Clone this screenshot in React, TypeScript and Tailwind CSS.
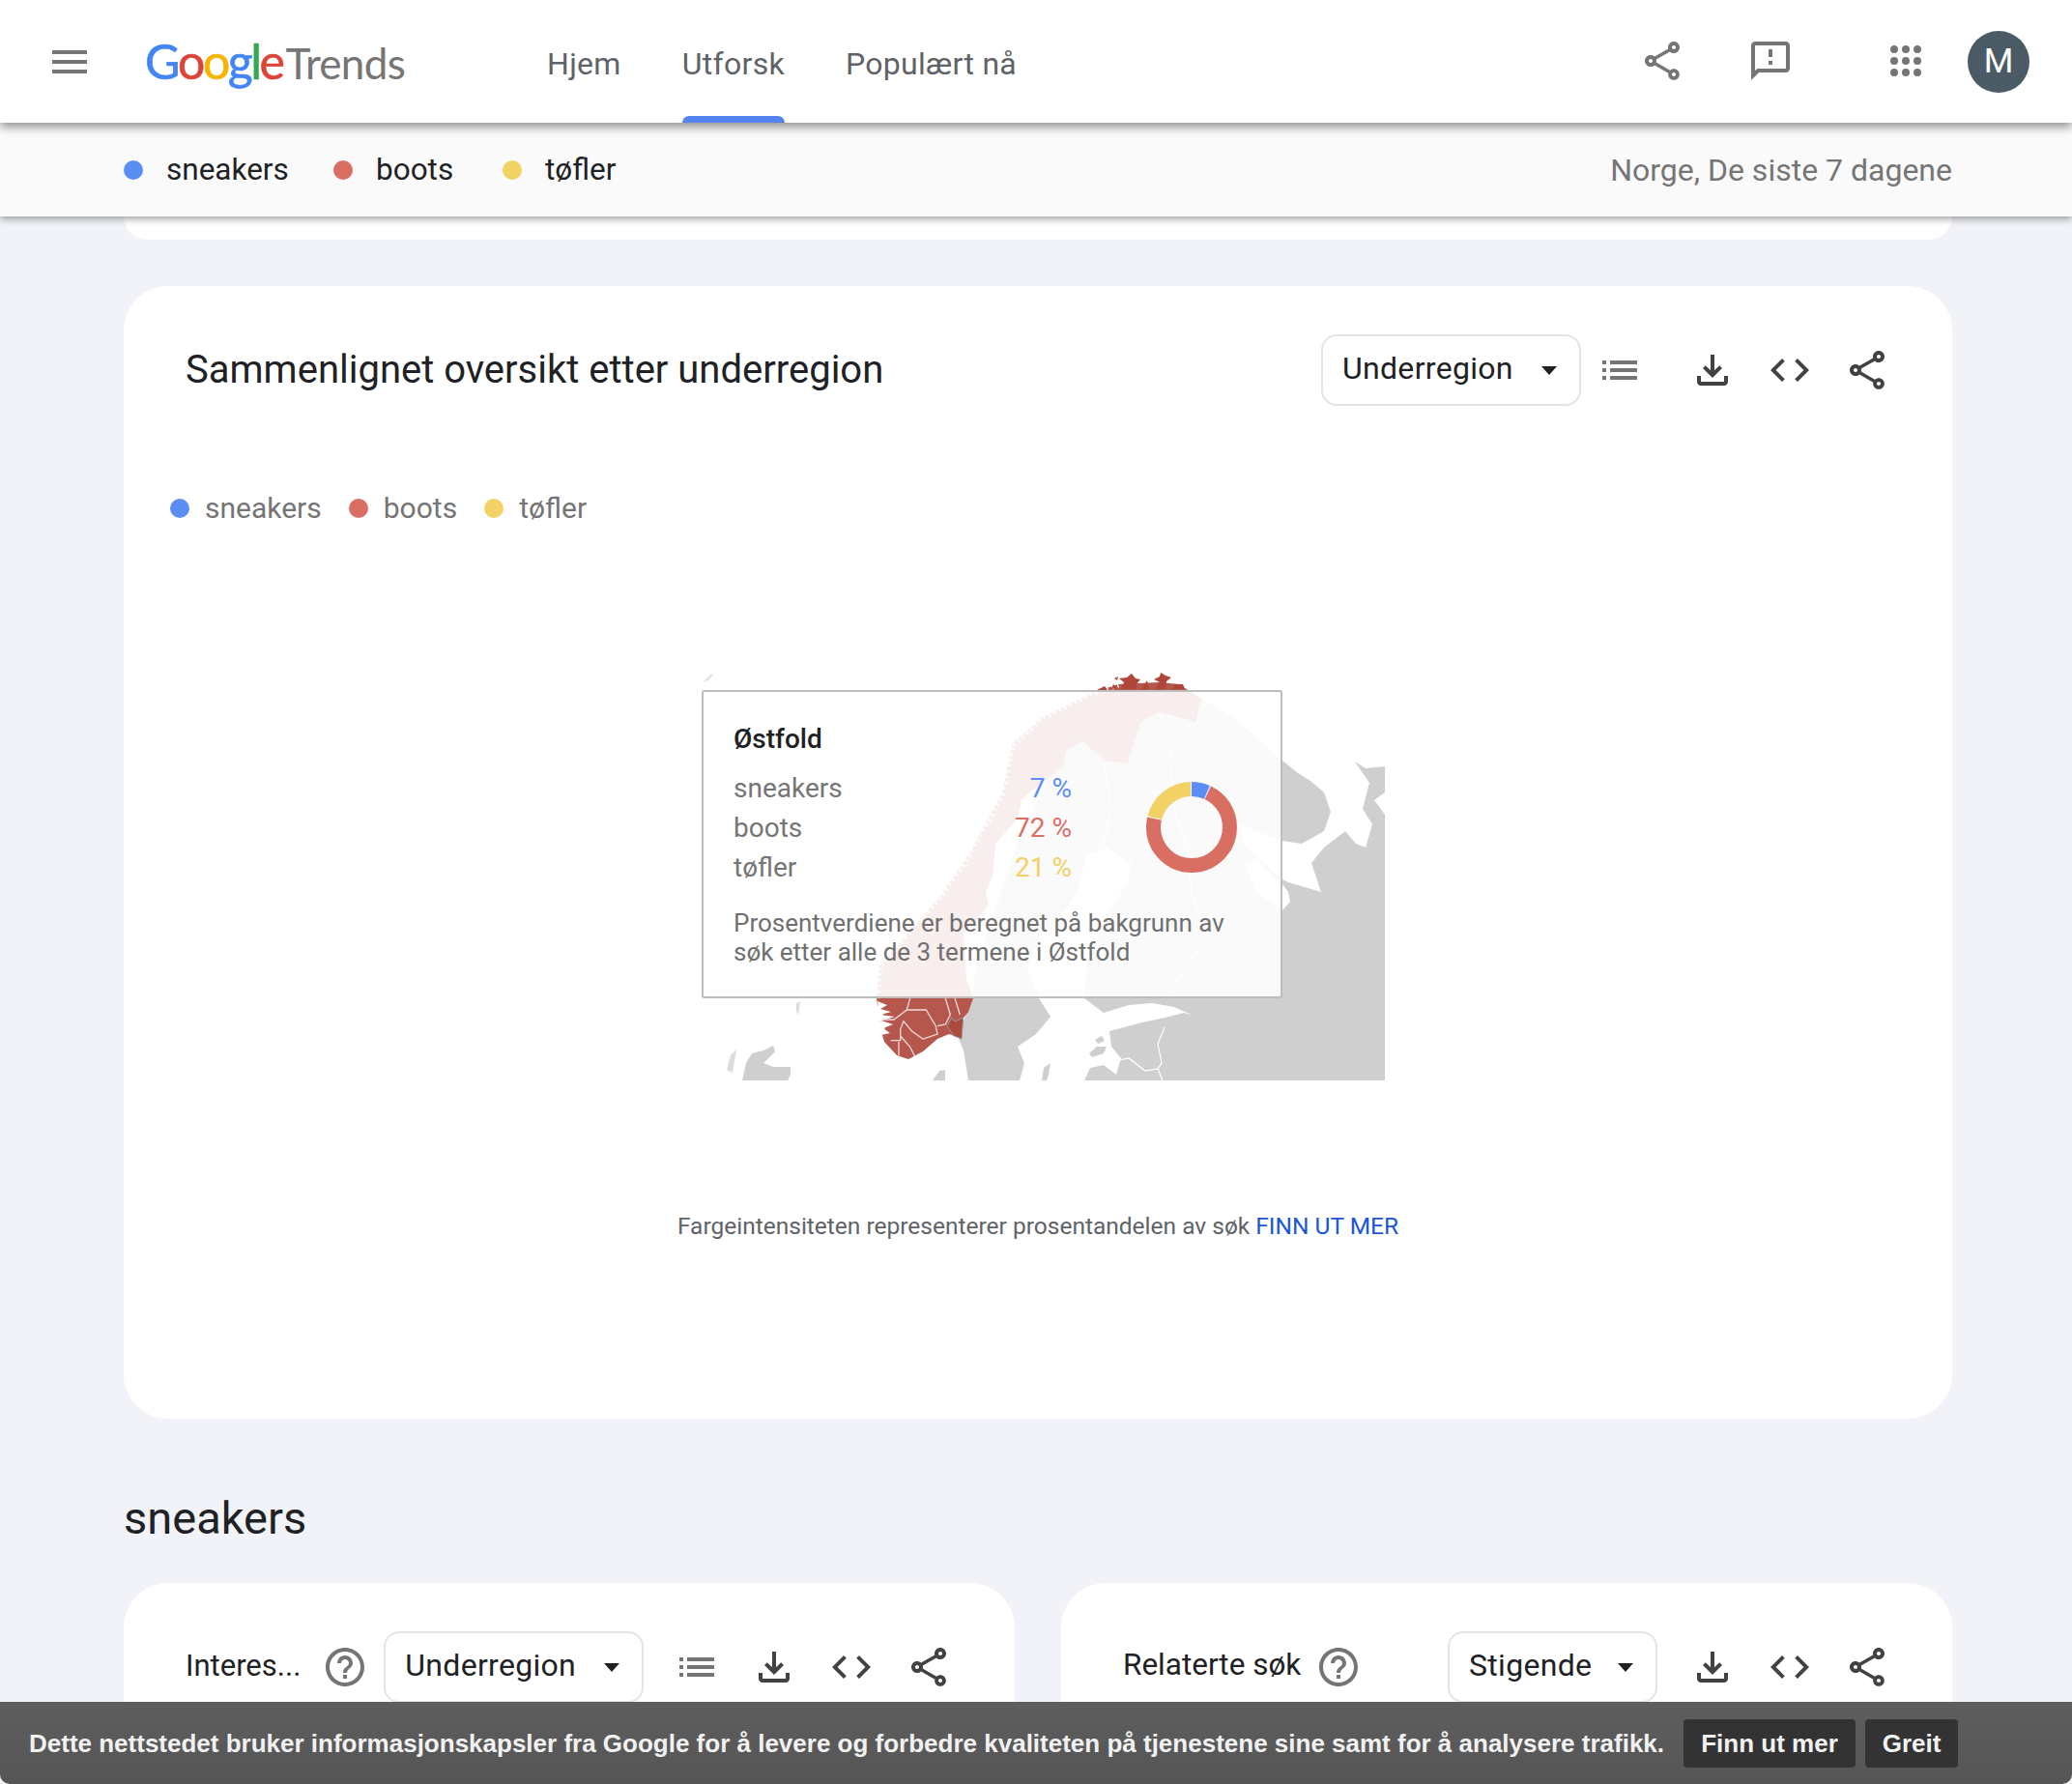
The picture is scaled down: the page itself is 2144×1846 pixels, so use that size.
import type { ReactNode } from "react"

const sans = "font-['Roboto',sans-serif]"

const paths = {
  share:
    "M18 16.08c-.76 0-1.44.3-1.96.77L8.91 12.7c.05-.23.09-.46.09-.7s-.04-.47-.09-.7l7.05-4.11c.54.5 1.25.81 2.04.81 1.66 0 3-1.34 3-3s-1.34-3-3-3-3 1.34-3 3c0 .24.04.47.09.7L8.04 9.81C7.5 9.31 6.79 9 6 9c-1.66 0-3 1.34-3 3s1.34 3 3 3c.79 0 1.5-.31 2.04-.81l7.12 4.16c-.05.21-.08.43-.08.65 0 1.61 1.31 2.92 2.92 2.92s2.92-1.31 2.92-2.92-1.31-2.92-2.92-2.92zM18 4c.55 0 1 .45 1 1s-.45 1-1 1-1-.45-1-1 .45-1 1-1zM6 13c-.55 0-1-.45-1-1s.45-1 1-1 1 .45 1 1-.45 1-1 1zm12 7.02c-.55 0-1-.45-1-1s.45-1 1-1 1 .45 1 1-.45 1-1 1z",
  feedback:
    "M20 2H4c-1.1 0-2 .9-2 2v18l4-4h14c1.1 0 2-.9 2-2V4c0-1.1-.9-2-2-2zm0 14H5.17L4 17.17V4h16v12zM11 12h2v2h-2zm0-6h2v4h-2z",
  download:
    "M18 15v3H6v-3H4v3c0 1.1.9 2 2 2h12c1.1 0 2-.9 2-2v-3h-2zm-1-4l-1.41-1.41L13 12.17V4h-2v8.17L8.41 9.59 7 11l5 5 5-5z",
  code: "M9.4 16.6L4.8 12l4.6-4.6L8 6l-6 6 6 6 1.4-1.4zm5.2 0l4.6-4.6-4.6-4.6L16 6l6 6-6 6-1.4-1.4z",
  list: "M3 13h2v-2H3v2zm0 4h2v-2H3v2zm0-8h2V7H3v2zm4 4h14v-2H7v2zm0 4h14v-2H7v2zM7 7v2h14V7H7z",
  help: "M11 18h2v-2h-2v2zm1-16C6.48 2 2 6.48 2 12s4.48 10 10 10 10-4.48 10-10S17.52 2 12 2zm0 18c-4.41 0-8-3.59-8-8s3.59-8 8-8 8 3.59 8 8-3.59 8-8 8zm0-14c-2.21 0-4 1.79-4 4h2c0-1.1.9-2 2-2s2 .9 2 2c0 2-3 1.75-3 5h2c0-2.25 3-2.5 3-5 0-2.21-1.79-4-4-4z",
}

function Icon({ d, className }: { d: string; className: string }) {
  return (
    <svg viewBox="0 0 24 24" className={`w-12 h-12 shrink-0 fill-current ${className}`}>
      <path d={d} />
    </svg>
  )
}

function Dropdown({ label, className }: { label: string; className: string }) {
  return (
    <div className={`flex items-center justify-between h-[74px] shrink-0 border-2 border-[#e4e4e4] rounded-[16px] bg-white pl-[20px] pr-[23px] text-[32px] tracking-[0.3px] text-[#202124] ${className}`}>
      <span className="pb-[4px]">{label}</span>
      <span className="w-0 h-0 border-x-[8px] border-x-transparent border-t-[9px] border-t-[#212121]" />
    </div>
  )
}

function Actions({ listClass, className }: { listClass?: string; className: string }) {
  return (
    <div className={`flex items-center ${className}`}>
      {listClass && <Icon d={paths.list} className={`text-[#757575] ${listClass}`} />}
      <div className="flex items-center gap-[32px] text-[#424242]">
        <Icon d={paths.download} className="" />
        <Icon d={paths.code} className="" />
        <Icon d={paths.share} className="" />
      </div>
    </div>
  )
}

type Term = { name: string; dot: string; width?: string }

function Legend({ items, textClass, gap }: { items: Term[]; textClass: string; gap: string }) {
  return (
    <div className={`flex items-center ${gap}`}>
      {items.map((i) => (
        <div key={i.name} className="flex items-center">
          <span className={`w-5 h-5 rounded-full ${i.dot}`} />
          <span className={`${textClass} ${i.width ?? ""}`}>{i.name}</span>
        </div>
      ))}
    </div>
  )
}

const terms: Term[] = [
  { name: "sneakers", dot: "bg-[#5b8ef5]", width: "w-[125px]" },
  { name: "boots", dot: "bg-[#d96e63]", width: "w-[83px]" },
  { name: "tøfler", dot: "bg-[#f2d165]" },
]

const plainTerms: Term[] = terms.map((t) => ({ name: t.name, dot: t.dot }))

function NorwayMap() {
  return (
    <svg viewBox="725 690 708 428" className="w-[708px] h-[428px] block">
      {/* land */}
      <path
        fill="#cfcfcf"
        d="M1100 770 L1243 723 L1280 745 L1327 787 L1343 800 L1356 808 L1370 820 L1377 840 L1370 860 L1347 873 L1327 870 L1300 860 L1283 853 L1288 875 L1327 910 L1333 913 L1347 917 L1367 923 L1362 908 L1357 893 L1370 877 L1392 860 L1403 873 L1413 877 L1420 853 L1410 837 L1417 810 L1402 788 L1413 795 L1433 793 L1433 820 L1422 828 L1433 843 L1433 1118 L1122 1118 L1128 1105 L1142 1102 L1155 1112 L1160 1095 L1150 1083 L1148 1067 L1182 1058 L1205 1053 L1225 1048 L1233 1050 L1215 1042 L1192 1038 L1168 1040 L1142 1048 L1122 1033 L1125 1000 L1143 950 L1167 913 L1170 893 L1145 877 L1125 885 L1115 920 L1100 945 L1075 970 L1063 1000 L1075 1033 L1087 1052 L1072 1070 L1053 1083 L1060 1100 L1055 1118 L1002 1118 L997 1087 L992 1075 L998 1053 L1006 1033 L1010 1000 L1050 880 Z"
      />
      <path fill="#ffffff" d="M1288 893 L1300 923 L1327 942 L1335 933 L1333 923 L1327 915 L1300 890 Z" />
      {/* islands */}
      <path fill="#cfcfcf" d="M1127 1090 L1135 1083 L1145 1083 L1142 1090 L1130 1094 Z" />
      <path fill="#cfcfcf" d="M1133 1076 L1140 1072 L1143 1077 L1136 1080 Z" />
      <path fill="#cfcfcf" d="M1078 1118 L1080 1105 L1087 1100 L1085 1112 L1083 1118 Z" />
      <path fill="#cfcfcf" d="M965 1118 L972 1108 L978 1107 L978 1118 Z" />
      <path fill="#cfcfcf" d="M768 1118 L772 1100 L778 1090 L790 1087 L800 1082 L802 1088 L790 1100 L800 1104 L818 1104 L818 1112 L815 1118 Z" />
      <path fill="#dcdcdc" d="M752 1107 L756 1092 L762 1086 L760 1098 L758 1110 Z" />
      <path fill="#dcdcdc" d="M824 1038 L828 1036 L826 1050 L824 1046 Z" />
      <path fill="#e4e4e4" d="M727 706 L735 698 L739 697 L733 704 Z" />
      {/* borders */}
      <g fill="none" stroke="#ffffff" strokeWidth="1.2">
        <path d="M1158 1097 L1168 1095 L1185 1108 L1198 1106 L1203 1118" />
        <path d="M1205 1063 L1198 1080 L1202 1100 L1198 1106" />
        <path d="M1217 770 L1210 783 L1217 847 L1230 877 L1233 927 L1250 967 L1207 1030" />
        <path d="M1143 790 L1150 840 L1140 875" />
      </g>
      {/* Norway */}
      <path
        fill="#b5574c"
        d="M1130 717 L1157 708 L1200 706 L1220 708 L1243 723 L1237 747 L1223 743 L1200 737 L1180 747 L1167 790 L1143 787 L1120 767 L1103 777 L1100 793 L1057 827 L1053 847 L1030 873 L1027 907 L1020 923 L1023 937 L997 967 L1000 1013 L1007 1033 L1002 1047 L997 1053 L995 1075 L982 1070 L970 1075 L955 1088 L940 1096 L928 1092 L915 1078 L912 1068 L916 1064 L910 1057 L914 1050 L908 1040 L907 1033 L910 1000 L933 973 L973 927 L1003 883 L1037 820 L1047 770 L1077 743 Z"
      />
      {/* feathered coast */}
      <path
        fill="none"
        stroke="#ffffff"
        strokeWidth="7"
        strokeDasharray="2 4"
        d="M907 1033 L910 1000 L933 973 L973 927 L1003 883 L1037 820 L1047 770 L1077 743 L1130 717 L1157 708"
      />
      <path
        fill="#b0463a"
        d="M1160 713 L1163 706 L1158 702 L1166 701 L1171 697 L1175 702 L1180 703 L1176 708 L1176 713 Z M1181 713 L1187 704 L1189 713 Z M1195 713 L1200 706 L1194 703 L1200 700 L1201 696 L1206 699 L1212 701 L1207 705 L1206 713 Z M1213 713 L1216 708 L1224 708 L1226 713 Z M1150 713 L1152 708 L1156 712 Z M1135 714 L1143 710 L1146 714 Z M1153 702 L1157 700 L1156 704 Z"
      />
      <path
        fill="#ffffff"
        d="M908 1036 L918 1040 L911 1044 L922 1047 L911 1050 L926 1052 L912 1056 L924 1060 L914 1064 L921 1069 L912 1071 Z"
      />
      <g fill="none" stroke="#f3dcd8" strokeWidth="1.3">
        <path d="M941.7 1033 L938.3 1045 L925 1055 L913.3 1055" />
        <path d="M938.3 1045 L958.3 1045 L968.3 1061.7 L970 1070 L955 1075 L943.3 1066.7 L935 1056.7 L931.7 1065 L931.7 1076.7 L921.7 1076.7" />
        <path d="M931.7 1072 L941.7 1083.3 L946.7 1093.3" />
        <path d="M930 1078 L930 1092" />
        <path d="M978.3 1033 L983.3 1050 L978.3 1060 L970 1061.7" />
        <path d="M988 1033 L993.3 1050" />
      </g>
      <path fill="#ad4a3e" stroke="#9a9a9a" strokeWidth="1" d="M985 1053 L988 1057 L996.7 1053 L995 1075 L986.7 1071.7 L980 1061.7 Z" />
    </svg>
  )
}

function Donut() {
  return (
    <svg viewBox="0 0 100 100" className="w-[100px] h-[100px] -rotate-90">
      <g fill="none" strokeWidth="15">
        <circle cx="50" cy="50" r="39.5" pathLength="100" stroke="#5b8ef5" strokeDasharray="6.6 93.4" />
        <circle cx="50" cy="50" r="39.5" pathLength="100" stroke="#d96e63" strokeDasharray="71.6 28.4" strokeDashoffset="-7" />
        <circle cx="50" cy="50" r="39.5" pathLength="100" stroke="#f2d165" strokeDasharray="20.6 79.4" strokeDashoffset="-79" />
      </g>
    </svg>
  )
}

function Tooltip() {
  const rows = [
    { name: "sneakers", value: "7 %", color: "text-[#5b8ef5]" },
    { name: "boots", value: "72 %", color: "text-[#d96e63]" },
    { name: "tøfler", value: "21 %", color: "text-[#f2d165]" },
  ]
  return (
    <div className="absolute left-[1px] top-[24px] w-[601px] h-[319px] bg-white/90 border-2 border-[#bdbdbd] rounded-[3px] pl-[31px] pt-[31px]">
      <div className="text-[28px] leading-[36px] font-medium text-[#202124]">Østfold</div>
      <div className="flex mt-[12px]">
        <div className="w-[350px] text-[28px]">
          {rows.map((r) => (
            <div key={r.name} className="flex justify-between h-[41px] leading-[41px]">
              <span className="text-[#757575]">{r.name}</span>
              <span className={r.color}>{r.value}</span>
            </div>
          ))}
        </div>
        <div className="ml-[74px] mt-[11px]">
          <Donut />
        </div>
      </div>
      <p className="mt-[22px] text-[26px] leading-[30px] text-[#6f6f6f]">
        Prosentverdiene er beregnet på bakgrunn av
        <br />
        søk etter alle de 3 termene i Østfold
      </p>
    </div>
  )
}

function Card({ children, className }: { children: ReactNode; className: string }) {
  return <section className={`bg-white rounded-[46px] ${className}`}>{children}</section>
}

export default function App() {
  return (
    <div className={`relative h-[1846px] overflow-hidden bg-[#f1f3f8] ${sans}`}>
      <header className="relative z-20 flex items-center h-[127px] bg-white shadow-[0_4px_10px_rgba(0,0,0,0.45)]">
        <div className="flex flex-col gap-[6px] ml-[54px] w-[36px]">
          <span className="h-[4px] bg-[#757575]" />
          <span className="h-[4px] bg-[#757575]" />
          <span className="h-[4px] bg-[#757575]" />
        </div>
        <div className="flex items-baseline ml-[60px] w-[271px] font-['Lato',sans-serif] text-[50px] tracking-[-2.5px] leading-none mb-[2px]">
          <span className="text-[#4285f4] [-webkit-text-stroke:0.6px_#4285f4]">G</span>
          <span className="text-[#db4437] [-webkit-text-stroke:0.6px_#db4437]">o</span>
          <span className="text-[#f4b400] [-webkit-text-stroke:0.6px_#f4b400]">o</span>
          <span className="text-[#4285f4] [-webkit-text-stroke:0.6px_#4285f4]">g</span>
          <span className="text-[#34a853] [-webkit-text-stroke:0.6px_#34a853]">l</span>
          <span className="text-[#db4437] [-webkit-text-stroke:0.6px_#db4437]">e</span>
          <span className="text-[#757575] text-[44px] tracking-[-0.7px] ml-[3px]">Trends</span>
        </div>
        <nav className="flex items-center h-full ml-[145px] gap-[63px] text-[32px] tracking-[0.3px] text-[#5f6368]">
          <span className="pt-[4px]">Hjem</span>
          <span className="relative flex items-center h-full pt-[4px]">
            Utforsk
            <span className="absolute left-0 right-0 bottom-0 h-[7px] bg-[#5383ec] rounded-t-[8px]" />
          </span>
          <span className="pt-[4px]">Populært nå</span>
        </nav>
        <div className="flex items-center ml-auto mr-[44px] text-[#757575]">
          <Icon d={paths.share} className="-mt-[2px]" />
          <Icon d={paths.feedback} className="ml-[64px] -mt-[2px]" />
          <svg viewBox="0 0 32 32" className="w-[32px] h-[32px] ml-[100px] -mt-[1px] fill-current">
            <circle cx="4" cy="4" r="4" />
            <circle cx="16" cy="4" r="4" />
            <circle cx="28" cy="4" r="4" />
            <circle cx="4" cy="16" r="4" />
            <circle cx="16" cy="16" r="4" />
            <circle cx="28" cy="16" r="4" />
            <circle cx="4" cy="28" r="4" />
            <circle cx="16" cy="28" r="4" />
            <circle cx="28" cy="28" r="4" />
          </svg>
          <div className="flex items-center justify-center w-[64px] h-[64px] ml-[48px] pt-[2px] rounded-full bg-[#4a5b66] text-white text-[35px]">
            M
          </div>
        </div>
      </header>

      <div className="relative z-10 flex items-center justify-between h-[97px] pl-[128px] pr-[124px] bg-[#fafafa] shadow-[0_3px_7px_rgba(0,0,0,0.35)]">
        <Legend items={terms} gap="gap-[48px]" textClass="ml-[24px] text-[31.5px] text-[#202124]" />
        <span className="text-[32px] text-[#757575]">Norge, De siste 7 dagene</span>
      </div>

      <main className="pl-[128px] pr-[124px]">
        <div className="h-[24px] bg-white rounded-b-[46px]" />

        <Card className="mt-[48px] h-[1172px] pt-[50px] pl-[64px] pr-[64px]">
          <div className="flex items-center">
            <h2 className="text-[40px] font-normal text-[#202124]">Sammenlignet oversikt etter underregion</h2>
            <Dropdown label="Underregion" className="w-[269px] ml-auto" />
            <Actions listClass="mr-[48px]" className="ml-[16px]" />
          </div>
          <div className="ml-[-16px] mt-[83px]">
            <Legend items={plainTerms} gap="gap-[28px]" textClass="ml-[16px] text-[30px] text-[#757575]" />
          </div>
          <div className="relative w-[708px] ml-[533px] mt-[142px]">
            <NorwayMap />
            <Tooltip />
          </div>
          <p className="mt-[133px] text-center text-[24.5px] text-[#5f6368]">
            Fargeintensiteten representerer prosentandelen av søk{" "}
            <span className="text-[#1a56d6]">FINN UT MER</span>
          </p>
        </Card>

        <h2 className="mt-[70px] text-[47px] leading-[66px] font-normal text-[#202124]">sneakers</h2>

        <div className="grid grid-cols-2 gap-[48px] mt-[34px]">
          <Card className="h-[300px] pt-[50px] pl-[64px] pr-[64px]">
            <div className="flex items-center">
              <span className="text-[31px] text-[#202124] pb-[2px]">Interes...</span>
              <Icon d={paths.help} className="text-[#757575] ml-[22px]" />
              <Dropdown label="Underregion" className="w-[269px] ml-[16px]" />
              <Actions listClass="mr-[32px]" className="ml-[31px]" />
            </div>
          </Card>
          <Card className="h-[300px] pt-[50px] pl-[64px] pr-[64px]">
            <div className="flex items-center">
              <span className="text-[31.5px] text-[#202124] pb-[4px]">Relaterte søk</span>
              <Icon d={paths.help} className="text-[#757575] ml-[15px]" />
              <Dropdown label="Stigende" className="w-[217px] ml-auto" />
              <Actions className="ml-[33px]" />
            </div>
          </Card>
        </div>
      </main>

      <div className="absolute z-30 left-0 right-0 bottom-0 flex items-center justify-between h-[85px] pl-[30px] pr-[118px] bg-gradient-to-b from-[#5e5e5e] to-[#555555] rounded-b-[10px] font-['Liberation_Sans',sans-serif] font-bold text-[26px] text-[#f1f1f1]">
        <span className="pt-[2px]">
          Dette nettstedet bruker informasjonskapsler fra Google for å levere og forbedre kvaliteten på tjenestene sine samt for å analysere trafikk.
        </span>
        <div className="flex gap-[10px]">
          <span className="flex items-center justify-center w-[178px] h-[50px] bg-[#333333] rounded-[4px] pt-[2px]">Finn ut mer</span>
          <span className="flex items-center justify-center w-[96px] h-[50px] bg-[#333333] rounded-[4px] pt-[2px]">Greit</span>
        </div>
      </div>
    </div>
  )
}
